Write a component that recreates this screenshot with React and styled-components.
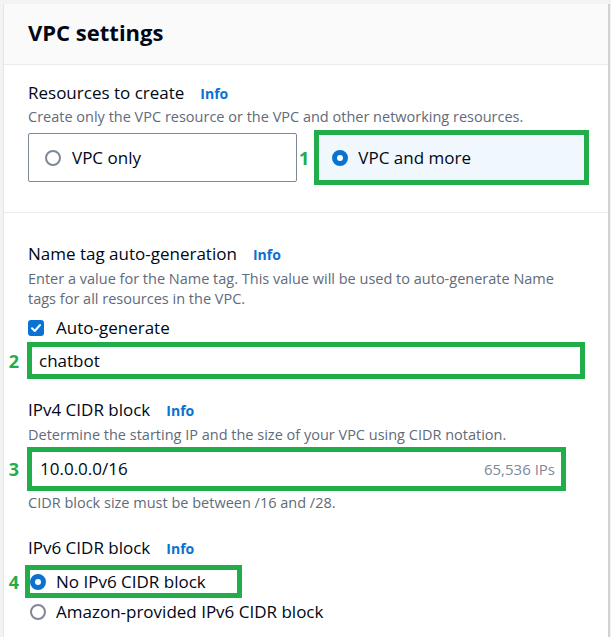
import React from "react";
import styled, { createGlobalStyle } from "styled-components";

const GlobalStyle = createGlobalStyle`
  html, body { margin: 0; padding: 0; }
  body {
    background: #f2f3f3;
    font-family: "Open Sans", "Liberation Sans", sans-serif;
    color: #000716;
  }
  * { box-sizing: border-box; }
`;

const GREEN = "#22ad4b";

const Page = styled.div`
  padding: 4px 3px 0 3px;
  min-height: 100vh;
`;

const Panel = styled.div`
  background: #ffffff;
  border-left: 1px solid #e2e4e6;
  box-shadow: 2px 0 0 #cfd3d6;
  min-height: calc(100vh - 4px);
`;

const Header = styled.div`
  height: 61px;
  padding: 14px 24px 0;
  background: #fafafa;
  border-bottom: 1px solid #e9ebed;
`;

const Title = styled.h2`
  margin: 0;
  font-size: 22px;
  line-height: 28px;
  font-weight: 700;
  color: #000716;
`;

const Section = styled.div`
  padding: ${(p) => p.$pt}px 19px ${(p) => p.$pb}px 24px;
  border-top: ${(p) => (p.$divider ? "1px solid #e9ebed" : "none")};
`;

const Label = styled.div`
  font-size: 17px;
  line-height: 22px;
  height: 22px;
  margin-top: ${(p) => p.$mt || 0}px;
  white-space: nowrap;
`;

const Info = styled.span`
  margin-left: 16px;
  font-size: 14px;
  line-height: 1;
  font-weight: 700;
  color: #0972d3;
`;

const Description = styled.div`
  font-size: 14.5px;
  line-height: 20px;
  color: #5f6b7a;
  margin-top: ${(p) => p.$mt || 0}px;
  max-width: ${(p) => p.$maxw || "none"};
`;

const Tiles = styled.div`
  display: flex;
  align-items: center;
  margin-top: 3px;
`;

const Tile = styled.div`
  display: flex;
  align-items: center;
  gap: ${(p) => (p.$highlight ? 10 : 11)}px;
  width: ${(p) => (p.$highlight ? "auto" : "269px")};
  flex: ${(p) => (p.$highlight ? 1 : "none")};
  height: ${(p) => (p.$highlight ? 55 : 49)}px;
  padding-left: ${(p) => (p.$highlight ? 13 : 16)}px;
  margin-left: ${(p) => (p.$highlight ? 5 : 0)}px;
  border: ${(p) =>
    p.$highlight ? `5px solid ${GREEN}` : "1px solid #7d8998"};
  border-radius: ${(p) => (p.$highlight ? 0 : 2)}px;
  background: ${(p) => (p.$selected ? "#f0f7fd" : "#ffffff")};
  font-size: 17px;
  line-height: 22px;
`;

const InlineBadge = styled.span`
  margin-left: 2px;
  font-size: 18px;
  font-weight: 700;
  color: ${GREEN};
  line-height: 22px;
`;

const Radio = styled.span`
  flex: none;
  width: 16px;
  height: 16px;
  border-radius: 50%;
  border: ${(p) => (p.$checked ? "5px solid #0972d3" : "2px solid #7d8998")};
  background: #ffffff;
`;

const CheckRow = styled.div`
  display: flex;
  align-items: center;
  gap: 12px;
  margin-top: 8px;
  font-size: 17px;
  line-height: 22px;
`;

const CheckBox = styled.span`
  flex: none;
  width: 16px;
  height: 16px;
  border-radius: 3px;
  background: #0972d3;
  display: flex;
  align-items: center;
  justify-content: center;
`;

const Highlight = styled.div`
  position: relative;
  border: 5px solid ${GREEN};
  background: #ffffff;
  width: ${(p) => p.$w}px;
  height: ${(p) => p.$h}px;
  margin-top: ${(p) => p.$mt || 0}px;
  margin-left: ${(p) => p.$ml || 0}px;
  display: flex;
  align-items: center;
`;

const Badge = styled.span`
  position: absolute;
  right: calc(100% + ${(p) => p.$gap || 13}px);
  top: 50%;
  transform: translateY(-50%);
  font-size: 18px;
  font-weight: 700;
  line-height: 22px;
  color: ${GREEN};
`;

const InputText = styled.span`
  flex: 1;
  padding-left: ${(p) => p.$pl || 7}px;
  font-size: 17px;
  line-height: 22px;
  color: #000716;
`;

const InputHint = styled.span`
  padding-right: 6px;
  font-size: 15px;
  color: #7d8998;
`;

const RadioRow = styled.div`
  display: flex;
  align-items: center;
  gap: 10px;
  font-size: 17px;
  line-height: 22px;
  margin-top: ${(p) => p.$mt || 0}px;
  margin-left: ${(p) => p.$ml || 0}px;
`;

export default function App() {
  return (
    <>
      <GlobalStyle />
      <Page>
        <Panel>
          <Header>
            <Title>VPC settings</Title>
          </Header>

          <Section $pt={17} $pb={27}>
            <Label>
              Resources to create<Info>Info</Info>
            </Label>
            <Description $mt={3}>
              Create only the VPC resource or the VPC and other networking resources.
            </Description>
            <Tiles>
              <Tile>
                <Radio />
                <span>VPC only</span>
              </Tile>
              <InlineBadge>1</InlineBadge>
              <Tile $highlight $selected>
                <Radio $checked />
                <span>VPC and more</span>
              </Tile>
            </Tiles>
          </Section>

          <Section $divider $pt={30} $pb={20}>
            <Label>
              Name tag auto-generation<Info>Info</Info>
            </Label>
            <Description $mt={4} $maxw="545px">
              Enter a value for the Name tag. This value will be used to auto-generate Name
              tags for all resources in the VPC.
            </Description>
            <CheckRow>
              <CheckBox>
                <svg width="12" height="12" viewBox="0 0 12 12">
                  <path
                    d="M2 6.3 L4.8 9 L10 3"
                    fill="none"
                    stroke="#ffffff"
                    strokeWidth="2"
                    strokeLinecap="round"
                    strokeLinejoin="round"
                  />
                </svg>
              </CheckBox>
              <span>Auto-generate</span>
            </CheckRow>
            <Highlight $w={558} $h={37} $mt={3} $ml={-1}>
              <Badge>2</Badge>
              <InputText>chatbot</InputText>
            </Highlight>

            <Label $mt={20}>
              IPv4 CIDR block<Info>Info</Info>
            </Label>
            <Description $mt={4}>
              Determine the starting IP and the size of your VPC using CIDR notation.
            </Description>
            <Highlight $w={539} $h={44} $mt={2} $ml={-1}>
              <Badge>3</Badge>
              <InputText $pl={8}>10.0.0.0/16</InputText>
              <InputHint>65,536 IPs</InputHint>
            </Highlight>
            <Description $mt={2}>CIDR block size must be between /16 and /28.</Description>

            <Label $mt={24}>
              IPv6 CIDR block<Info>Info</Info>
            </Label>
            <Highlight $w={217} $h={33} $mt={6} $ml={-3}>
              <Badge $gap={11}>4</Badge>
              <RadioRow>
                <Radio $checked />
                <span>No IPv6 CIDR block</span>
              </RadioRow>
            </Highlight>
            <RadioRow $mt={3} $ml={2}>
              <Radio />
              <span>Amazon-provided IPv6 CIDR block</span>
            </RadioRow>
          </Section>
        </Panel>
      </Page>
    </>
  );
}
